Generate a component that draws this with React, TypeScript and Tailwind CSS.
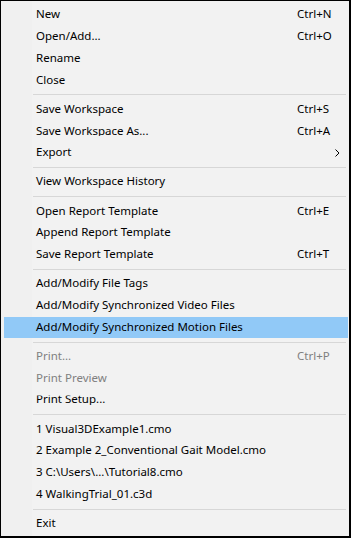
import React from 'react';

type Item = {
  label: string;
  shortcut?: string;
  disabled?: boolean;
  submenu?: boolean;
  active?: boolean;
  clipped?: boolean;
};

const groups: Item[][] = [
  [
    { label: 'New', shortcut: 'Ctrl+N' },
    { label: 'Open/Add...', shortcut: 'Ctrl+O' },
    { label: 'Rename' },
    { label: 'Close' },
  ],
  [
    { label: 'Save Workspace', shortcut: 'Ctrl+S' },
    { label: 'Save Workspace As...', shortcut: 'Ctrl+A', clipped: true },
    { label: 'Export', submenu: true },
  ],
  [{ label: 'View Workspace History' }],
  [
    { label: 'Open Report Template', shortcut: 'Ctrl+E' },
    { label: 'Append Report Template' },
    { label: 'Save Report Template', shortcut: 'Ctrl+T' },
  ],
  [
    { label: 'Add/Modify File Tags' },
    { label: 'Add/Modify Synchronized Video Files' },
    { label: 'Add/Modify Synchronized Motion Files', active: true },
  ],
  [
    { label: 'Print...', shortcut: 'Ctrl+P', disabled: true },
    { label: 'Print Preview', disabled: true },
    { label: 'Print Setup...', clipped: true },
  ],
  [
    { label: '1 Visual3DExample1.cmo' },
    { label: '2 Example 2_Conventional Gait Model.cmo' },
    { label: '3 C:\\Users\\...\\Tutorial8.cmo' },
    { label: '4 WalkingTrial_01.c3d' },
  ],
  [{ label: 'Exit' }],
];

function MenuRow({ item }: { item: Item }) {
  // a couple of rows in the capture have their top pixels cut off
  const clip = item.clipped ? '[clip-path:inset(2px_0_0_0)]' : '';
  return (
    <div
      className={`ml-[3px] mr-px flex h-[21.8px] items-center pl-[32px] ${
        item.active ? 'bg-[#91c9f7]' : ''
      } ${item.disabled ? 'text-[#808080]' : 'text-black'}`}
    >
      <span className={`-mt-[2px] w-[261px] shrink-0 whitespace-nowrap ${clip}`}>{item.label}</span>
      <span className={`-mt-[2px] w-[38px] shrink-0 whitespace-nowrap ${clip}`}>{item.shortcut}</span>
      {item.submenu && (
        <svg width="5" height="8" viewBox="0 0 5 8" className="shrink-0">
          <path d="M0.5 0.5 L4 4 L0.5 7.5" fill="none" stroke="#000" strokeWidth="1" />
        </svg>
      )}
    </div>
  );
}

function Separator() {
  return (
    <div className="flex h-[7.3px] items-center">
      <div className="ml-[32px] mr-[3px] h-px flex-1 bg-[#d7d7d7]" />
    </div>
  );
}

export default function App() {
  return (
    <div className="h-[538px] w-[351px] border-l border-t border-black border-r-2 border-b-2 bg-[linear-gradient(to_right,#f0f0f0_31px,#f2f2f2_31px)] pt-[3.1px] font-['Noto_Sans','Liberation_Sans',sans-serif] text-[11.5px] leading-none">
      {groups.map((group, gi) => (
        <React.Fragment key={gi}>
          {gi > 0 && <Separator />}
          {group.map((item) => (
            <MenuRow key={item.label} item={item} />
          ))}
        </React.Fragment>
      ))}
    </div>
  );
}
